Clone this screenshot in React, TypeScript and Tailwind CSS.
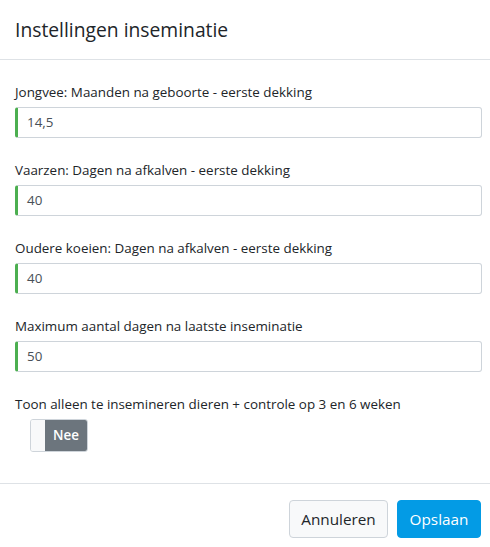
import React from "react";

const fields = [
  { label: "Jongvee: Maanden na geboorte - eerste dekking", value: "14,5" },
  { label: "Vaarzen: Dagen na afkalven - eerste dekking", value: "40" },
  { label: "Oudere koeien: Dagen na afkalven - eerste dekking", value: "40" },
  { label: "Maximum aantal dagen na laatste inseminatie", value: "50" },
];

export default function App() {
  return (
    <div
      className="w-[490px] h-[547px] bg-white overflow-hidden text-[#212529]"
      style={{ fontFamily: '"Open Sans", "Noto Sans", sans-serif' }}
    >
      <div className="h-[60px] border-b border-[#dee2e6] px-[15px] flex items-center">
        <h1 className="text-[19.3px] leading-[24px] font-medium text-[#212529] pt-[1px]">
          Instellingen inseminatie
        </h1>
      </div>
      <div className="px-[15px] pt-[22px] pb-[31px] border-b border-[#dee2e6]">
        {fields.map((f) => (
          <div key={f.label} className="mb-[22px]">
            <div className="text-[13.4px] leading-[20px] mb-[5px]">{f.label}</div>
            <div className="h-[31px] w-[467px] border border-[#ced4da] border-l-[3px] border-l-[#4caf50] rounded-[3px] flex items-center pl-[9px] text-[13.4px] text-[#495057]">
              {f.value}
            </div>
          </div>
        ))}
        <div className="text-[13.4px] leading-[20px] mb-[5px]">
          Toon alleen te insemineren dieren + controle op 3 en 6 weken
        </div>
        <div className="ml-[15px] w-[58px] h-[33px] border border-[#ced4da] rounded-[3px] flex overflow-hidden">
          <div className="w-[14px] bg-[#f8f9fa]" />
          <div className="flex-1 bg-[#6c757d] text-white text-[13.4px] font-semibold flex items-center justify-center">
            Nee
          </div>
        </div>
      </div>
      <div className="flex justify-end gap-[9px] px-[9px] pt-[16px]">
        <button className="h-[38px] w-[99px] bg-[#f8f9fa] border border-[#ced4da] rounded-[4px] text-[15.3px] text-[#212529]">
          Annuleren
        </button>
        <button className="h-[38px] w-[84px] bg-[#039be5] border border-[#039be5] rounded-[4px] text-[15.3px] text-white">
          Opslaan
        </button>
      </div>
    </div>
  );
}
